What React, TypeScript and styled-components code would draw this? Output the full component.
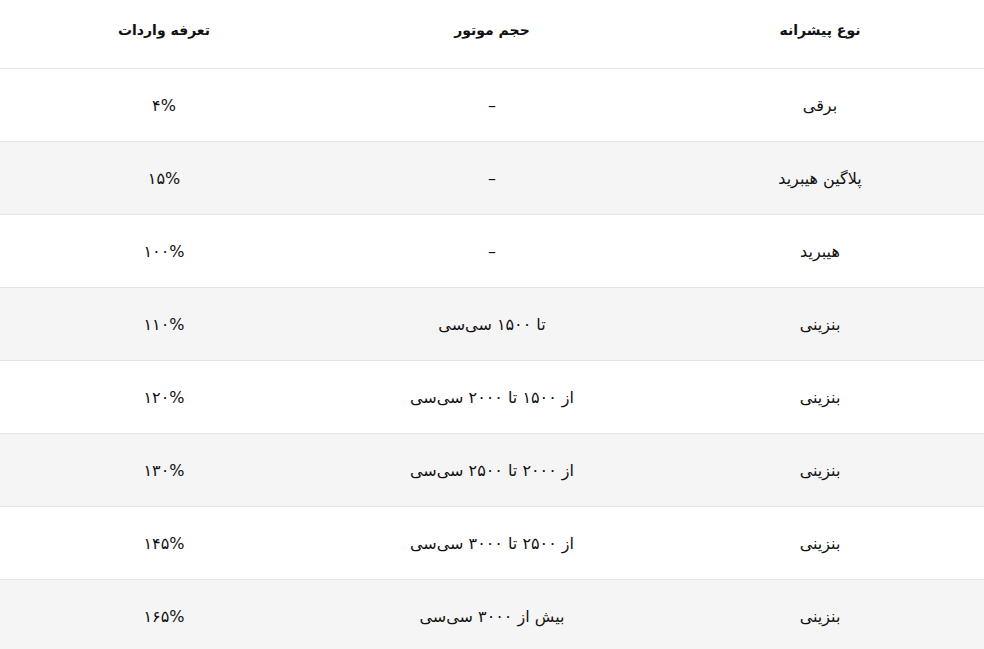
import React from "react";
import styled, { createGlobalStyle } from "styled-components";

const Global = createGlobalStyle`
  html, body { margin: 0; padding: 0; background: #ffffff; }
  body { font-family: "DejaVu Sans", "Noto Sans", sans-serif; }
`;

const Table = styled.table`
  width: 984px;
  border-collapse: collapse;
  table-layout: fixed;
  direction: rtl;
  color: #111111;
  font-family: "DejaVu Sans", "Noto Sans", sans-serif;
`;

const HeadCell = styled.th`
  height: 60px;
  padding: 0 0 8px 0;
  font-size: 14px;
  font-weight: bold;
  text-align: center;
  vertical-align: middle;
  border-bottom: 1px solid #e6e6e6;
`;

const Row = styled.tr<{ $shade: boolean }>`
  background: ${(p) => (p.$shade ? "#f5f5f5" : "#ffffff")};
`;

const Cell = styled.td`
  height: 72px;
  padding: 0;
  font-size: 16px;
  text-align: center;
  vertical-align: middle;
  border-bottom: 1px solid #e6e6e6;
`;

const rows: [string, string, string][] = [
  ["برقی", "–", "۴%"],
  ["پلاگین هیبرید", "–", "۱۵%"],
  ["هیبرید", "–", "۱۰۰%"],
  ["بنزینی", "تا ۱۵۰۰ سی‌سی", "۱۱۰%"],
  ["بنزینی", "از ۱۵۰۰ تا ۲۰۰۰ سی‌سی", "۱۲۰%"],
  ["بنزینی", "از ۲۰۰۰ تا ۲۵۰۰ سی‌سی", "۱۳۰%"],
  ["بنزینی", "از ۲۵۰۰ تا ۳۰۰۰ سی‌سی", "۱۴۵%"],
  ["بنزینی", "بیش از ۳۰۰۰ سی‌سی", "۱۶۵%"],
];

export default function App() {
  return (
    <>
      <Global />
      <Table dir="rtl">
        <thead>
          <tr>
            <HeadCell>نوع پیشرانه</HeadCell>
            <HeadCell>حجم موتور</HeadCell>
            <HeadCell>تعرفه واردات</HeadCell>
          </tr>
        </thead>
        <tbody>
          {rows.map((r, i) => (
            <Row key={i} $shade={i % 2 === 1}>
              <Cell>{r[0]}</Cell>
              <Cell>{r[1]}</Cell>
              <Cell>{r[2]}</Cell>
            </Row>
          ))}
        </tbody>
      </Table>
    </>
  );
}
